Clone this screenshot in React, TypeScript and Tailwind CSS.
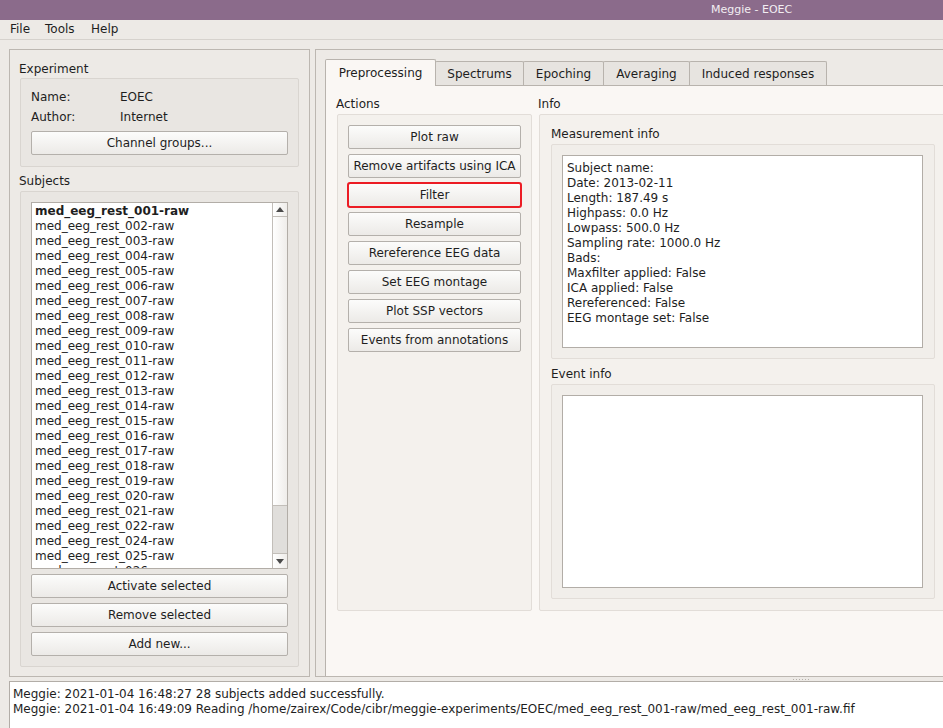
import React from "react";

const subjects: string[] = [];
for (let i = 1; i <= 26; i++) {
  if (i === 23) continue;
  subjects.push(`med_eeg_rest_${String(i).padStart(3, "0")}-raw`);
}

const measurement = [
  "Subject name:",
  "Date: 2013-02-11",
  "Length: 187.49 s",
  "Highpass: 0.0 Hz",
  "Lowpass: 500.0 Hz",
  "Sampling rate: 1000.0 Hz",
  "Bads:",
  "Maxfilter applied: False",
  "ICA applied: False",
  "Rereferenced: False",
  "EEG montage set: False",
];

function Btn({ children, className = "" }: { children: React.ReactNode; className?: string }) {
  return (
    <div
      className={`h-[24px] shrink-0 flex items-center justify-center rounded-[2px] border border-[#b4b0ab] bg-gradient-to-b from-[#fcfcfb] to-[#eceae7] text-[#1e1e1e] whitespace-nowrap ${className}`}
    >
      {children}
    </div>
  );
}

function Tab({ label, w, active = false, first = false }: { label: string; w: string; active?: boolean; first?: boolean }) {
  if (active) {
    return (
      <div
        className={`${w} h-[27px] -mb-[1px] relative z-10 shrink-0 border border-b-0 border-[#b8b3ad] rounded-t-[2px] bg-[#faf7f4] flex items-center justify-center`}
      >
        {label}
      </div>
    );
  }
  return (
    <div
      className={`${w} h-[24px] shrink-0 ${first ? "" : "-ml-[1px]"} border border-b-0 border-[#b8b3ad] rounded-t-[2px] bg-[#e7e4e0] flex items-center justify-center pt-[2px]`}
    >
      {label}
    </div>
  );
}

export default function App() {
  return (
    <div className="w-[943px] h-[728px] overflow-hidden bg-[#edeae6] font-['DejaVu_Sans',sans-serif] text-[12px] leading-[15px] text-[#1e1e1e] flex flex-col">
      {/* title bar */}
      <div className="h-[20px] shrink-0 bg-[#8b6b8b] text-[#f2eef2] text-[11px] leading-[20px] pl-[711px] whitespace-nowrap">
        Meggie - EOEC
      </div>
      {/* menu bar */}
      <div className="h-[20px] shrink-0 border-b border-[#d6d2cd] flex items-center pl-[10px]">
        <span className="w-[35px]">File</span>
        <span className="w-[46px]">Tools</span>
        <span>Help</span>
      </div>

      {/* main */}
      <div className="h-[637px] shrink-0 flex pt-[9px] pl-[9px] gap-[5px]">
        {/* left frame */}
        <div className="w-[301px] h-[628px] shrink-0 border border-[#bcb7b1] flex flex-col pt-[12px] pb-[9px]">
          <div className="h-[15px] pl-[9px]">Experiment</div>
          <div className="mt-[1px] ml-[10px] w-[279px] h-[89px] border border-[#d9d5d0] bg-[#e9e6e2] rounded-[2px] pt-[11px] px-[10px] flex flex-col">
            <div className="grid grid-cols-[89px_1fr]">
              <span>Name:</span>
              <span>EOEC</span>
            </div>
            <div className="grid grid-cols-[89px_1fr] mt-[5px]">
              <span>Author:</span>
              <span>Internet</span>
            </div>
            <Btn className="mt-[6px]">Channel groups...</Btn>
          </div>
          <div className="h-[15px] mt-[7px] pl-[9px]">Subjects</div>
          <div className="mt-[2px] ml-[10px] w-[279px] flex-1 border border-[#d9d5d0] bg-[#e9e6e2] rounded-[2px] pt-[10px] pb-[10px] px-[10px] flex flex-col">
            <div className="h-[367px] shrink-0 border border-[#b2ada7] bg-white flex">
              <div className="flex-1 h-[365px] overflow-hidden pt-[1px] pl-[3px] whitespace-nowrap">
                {subjects.map((s, i) => (
                  <div key={s} className={`h-[15px] ${i === 0 ? "font-bold" : ""}`}>
                    {s}
                  </div>
                ))}
              </div>
              <div className="w-[15px] shrink-0 border-l border-[#c2beb9] flex flex-col">
                <div className="h-[14px] shrink-0 border-b border-[#c2beb9] bg-gradient-to-r from-white to-[#efedea] flex items-center justify-center">
                  <svg width="8" height="5" viewBox="0 0 8 5">
                    <polygon points="0,5 8,5 4,0" fill="#4a4a4a" />
                  </svg>
                </div>
                <div className="flex-1 bg-gradient-to-r from-white to-[#efedea] flex flex-col justify-end">
                  <div className="h-[48px] border-t border-[#c2beb9] bg-[#e0dedb]" />
                </div>
                <div className="h-[15px] shrink-0 border-t border-[#c2beb9] bg-gradient-to-r from-white to-[#efedea] flex items-center justify-center">
                  <svg width="8" height="5" viewBox="0 0 8 5">
                    <polygon points="0,0 8,0 4,5" fill="#4a4a4a" />
                  </svg>
                </div>
              </div>
            </div>
            <Btn className="mt-[5px]">Activate selected</Btn>
            <Btn className="mt-[5px]">Remove selected</Btn>
            <Btn className="mt-[5px]">Add new...</Btn>
          </div>
        </div>

        {/* right frame */}
        <div className="w-[660px] h-[628px] shrink-0 border border-[#bcb7b1] pt-[9px] pl-[9px] flex flex-col">
          <div className="h-[26px] shrink-0 flex items-end">
            <Tab label="Preprocessing" w="w-[111px]" active />
            <Tab label="Spectrums" w="w-[89px]" />
            <Tab label="Epoching" w="w-[81px]" />
            <Tab label="Averaging" w="w-[87px]" />
            <Tab label="Induced responses" w="w-[138px]" />
          </div>
          <div className="flex-1 border border-r-0 border-b-0 border-[#b8b3ad] bg-[#faf7f4] pt-[11px] pl-[10px] flex">
            {/* Actions */}
            <div className="w-[196px] shrink-0 flex flex-col">
              <div className="h-[15px]">Actions</div>
              <div className="mt-[2px] ml-[1px] w-[195px] h-[497px] border border-[#e2ddd8] bg-[#f4f1ed] rounded-[2px] pt-[10px] px-[10px] flex flex-col gap-[5px]">
                <Btn>Plot raw</Btn>
                <Btn>Remove artifacts using ICA</Btn>
                <Btn className="outline-2 outline-solid outline-[#ec1c24] -outline-offset-1">Filter</Btn>
                <Btn>Resample</Btn>
                <Btn>Rereference EEG data</Btn>
                <Btn>Set EEG montage</Btn>
                <Btn>Plot SSP vectors</Btn>
                <Btn>Events from annotations</Btn>
              </div>
            </div>
            {/* Info */}
            <div className="ml-[6px] w-[410px] shrink-0 flex flex-col">
              <div className="h-[15px]">Info</div>
              <div className="mt-[2px] ml-[1px] w-[408px] h-[497px] border border-[#e2ddd8] bg-[#f4f1ed] rounded-[2px] pt-[12px] pl-[11px] flex flex-col">
                <div className="h-[15px]">Measurement info</div>
                <div className="mt-[2px] w-[384px] h-[215px] border border-[#e2ddd8] bg-[#f1eeea] rounded-[2px] pt-[10px] pl-[10px]">
                  <div className="w-[361px] h-[193px] border border-[#b2ada7] bg-white pt-[5px] pl-[4px] whitespace-nowrap">
                    {measurement.map((l) => (
                      <div key={l} className="h-[15px]">
                        {l}
                      </div>
                    ))}
                  </div>
                </div>
                <div className="h-[15px] mt-[8px]">Event info</div>
                <div className="mt-[2px] w-[384px] h-[215px] border border-[#e2ddd8] bg-[#f1eeea] rounded-[2px] pt-[10px] pl-[10px]">
                  <div className="w-[361px] h-[193px] border border-[#b2ada7] bg-white" />
                </div>
              </div>
            </div>
          </div>
        </div>
      </div>

      {/* splitter */}
      <div className="h-[4px] shrink-0 flex items-center pl-[793px] gap-[2px]">
        <div className="w-[1px] h-[1px] bg-[#b5b0aa]" />
        <div className="w-[1px] h-[1px] bg-[#b5b0aa]" />
        <div className="w-[1px] h-[1px] bg-[#b5b0aa]" />
        <div className="w-[1px] h-[1px] bg-[#b5b0aa]" />
        <div className="w-[1px] h-[1px] bg-[#b5b0aa]" />
        <div className="w-[1px] h-[1px] bg-[#b5b0aa]" />
      </div>

      {/* log */}
      <div className="ml-[9px] w-[960px] h-[60px] shrink-0 border border-[#b2ada7] bg-white pt-[5px] pl-[3px] whitespace-nowrap">
        <div className="h-[15px]">Meggie: 2021-01-04 16:48:27 28 subjects added successfully.</div>
        <div className="h-[15px]">
          Meggie: 2021-01-04 16:49:09 Reading /home/zairex/Code/cibr/meggie-experiments/EOEC/med_eeg_rest_001-raw/med_eeg_rest_001-raw.fif
        </div>
      </div>
    </div>
  );
}
